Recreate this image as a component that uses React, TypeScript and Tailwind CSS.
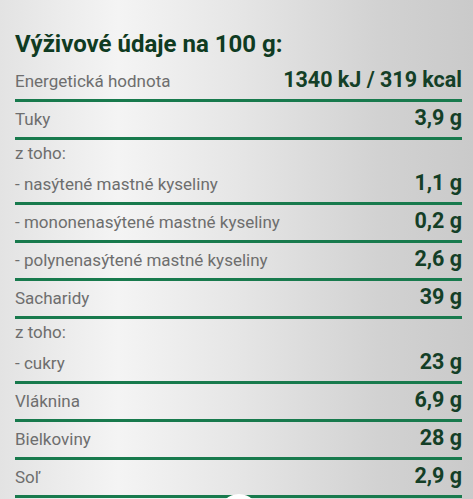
const rows: { label: string; value?: string; sub?: boolean }[] = [
  { label: 'Energetická hodnota', value: '1340 kJ / 319 kcal' },
  { label: 'Tuky', value: '3,9 g' },
  { label: 'z toho:', sub: true },
  { label: '- nasýtené mastné kyseliny', value: '1,1 g' },
  { label: '- mononenasýtené mastné kyseliny', value: '0,2 g' },
  { label: '- polynenasýtené mastné kyseliny', value: '2,6 g' },
  { label: 'Sacharidy', value: '39 g' },
  { label: 'z toho:', sub: true },
  { label: '- cukry', value: '23 g' },
  { label: 'Vláknina', value: '6,9 g' },
  { label: 'Bielkoviny', value: '28 g' },
  { label: 'Soľ', value: '2,9 g' },
];

const NutritionRow = ({ row }: { row: (typeof rows)[0] }) => {
  if (row.sub) {
    return (
      <div className="h-[27px] pt-[1px] text-[17px] leading-[24px] text-[#6e6e6e]">{row.label}</div>
    );
  }
  return (
    <div className="flex h-[38px] items-baseline justify-between border-b-[3px] border-[#187a4d] pt-[4px]">
      <span className="text-[17px] leading-[24px] text-[#6e6e6e]">{row.label}</span>
      <span className="text-[21.5px] font-bold leading-[24px] text-[#143f27]">{row.value}</span>
    </div>
  );
};

export default function App() {
  return (
    <div className="relative h-[499px] overflow-hidden bg-[linear-gradient(90deg,#e3e3e3_0%,#f4f4f4_25%,#e6e6e6_50%,#d2d2d2_80%,#cacaca_100%)] font-['Roboto',_'Liberation_Sans',_sans-serif]">
      <div className="ml-[15px] w-[447px]">
        <h2 className="h-[64px] pt-[29px] text-[24px] font-bold leading-[30px] text-[#0f3b22]">
          Výživové údaje na 100 g:
        </h2>
        {rows.map((row, i) => (
          <NutritionRow key={i} row={row} />
        ))}
      </div>
      <div className="absolute left-[219px] top-[494px] h-[40px] w-[40px] rounded-full bg-white" />
    </div>
  );
}
